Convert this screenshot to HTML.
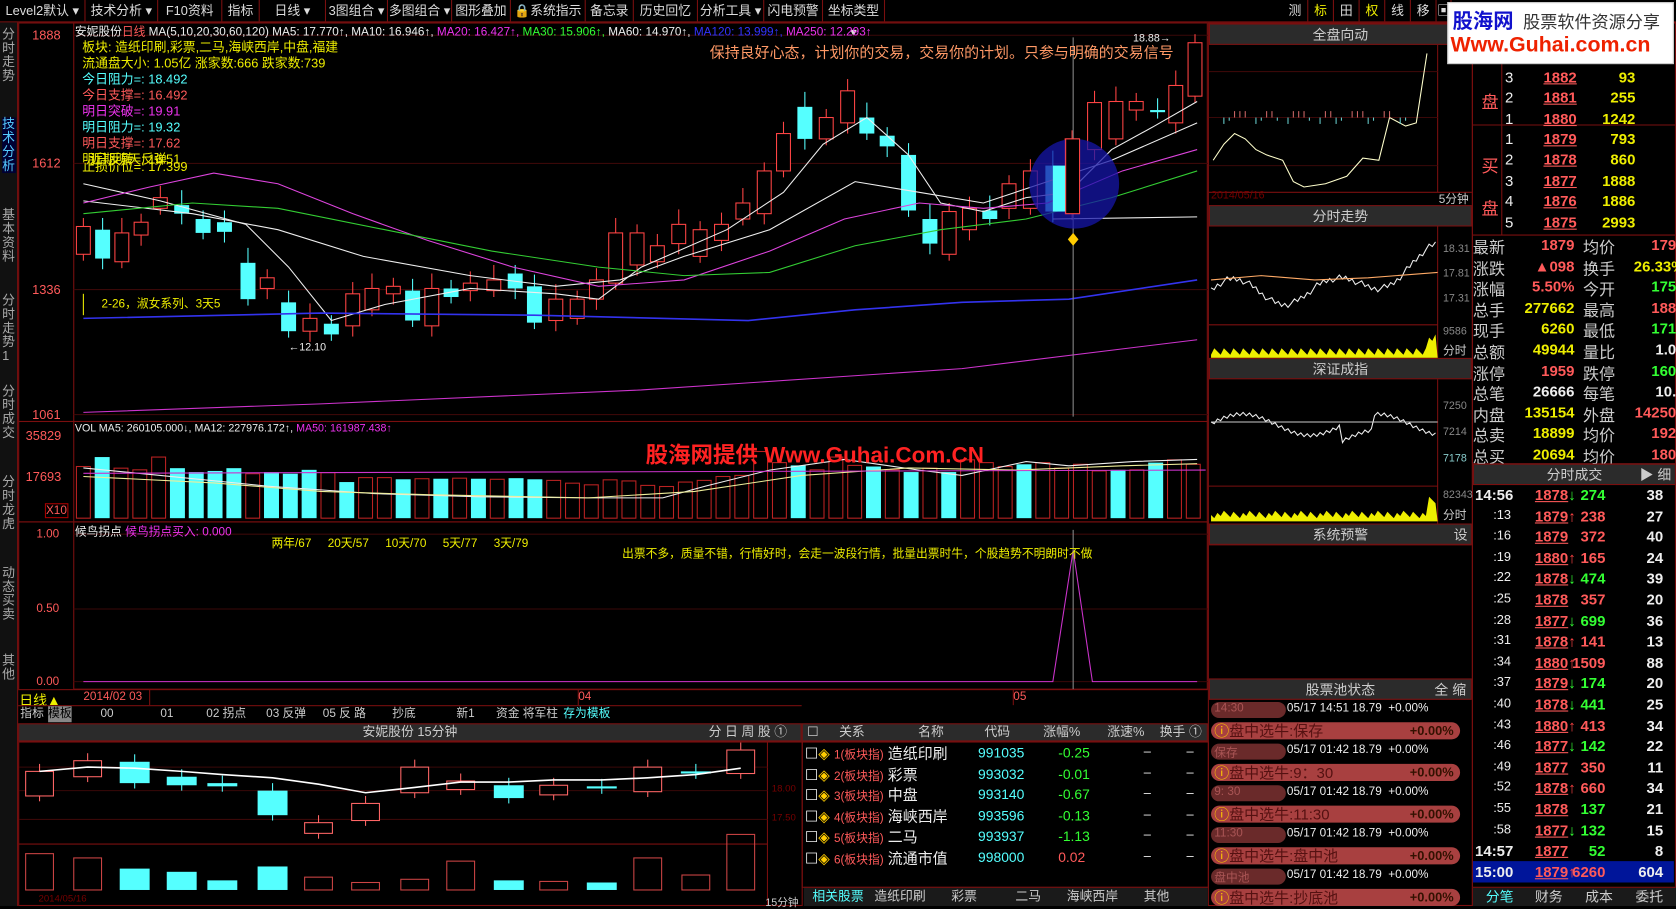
<!DOCTYPE html>
<html><head><meta charset="utf-8"><style>
*{margin:0;padding:0;box-sizing:border-box}
html,body{width:1676px;height:906px;overflow:hidden;background:#000}
#w{position:absolute;left:0;top:0;width:1568px;height:848px;transform:scale(1.06888,1.0684);transform-origin:0 0;font-family:"Liberation Sans","Noto Sans CJK SC",sans-serif;font-size:12px;color:#ccc;background:#000}
.a{position:absolute;white-space:nowrap}
.hd{position:absolute;background:#2b2b2b;color:#ccc;text-align:center;font-size:13px;border:1px solid #7a0f0f}
.tb{position:absolute;top:0;height:20px;line-height:20px;color:#ddd;font-size:12px;border-right:1px solid #7a0f0f;text-align:center}
.r{color:#ff5a5a}.g{color:#3f3}.y{color:#ee0}.c{color:#5ff}.m{color:#e3e}.w{color:#eee}
svg{position:absolute;left:0;top:0}
.ob{position:absolute;font-size:14px;font-weight:bold;white-space:nowrap}
</style></head><body><div id="w">
<div class="a" style="left:0;top:0;width:1568px;height:21px;background:#000;border-bottom:1px solid #7a0f0f"></div>
<div class="tb" style="left:0;width:80px">Level2默认 ▾</div>
<div class="tb" style="left:80px;width:68px">技术分析 ▾</div>
<div class="tb" style="left:148px;width:60px">F10资料</div>
<div class="tb" style="left:208px;width:35px">指标</div>
<div class="tb" style="left:243px;width:62px">日线 ▾</div>
<div class="tb" style="left:305px;width:58px">3图组合 ▾</div>
<div class="tb" style="left:363px;width:60px">多图组合 ▾</div>
<div class="tb" style="left:423px;width:55px">图形叠加</div>
<div class="tb" style="left:478px;width:70px">🔒系统指示</div>
<div class="tb" style="left:548px;width:45px">备忘录</div>
<div class="tb" style="left:593px;width:60px">历史回忆</div>
<div class="tb" style="left:653px;width:62px">分析工具 ▾</div>
<div class="tb" style="left:715px;width:55px">闪电预警</div>
<div class="tb" style="left:770px;width:58px">坐标类型 ▾</div>
<div class="tb" style="left:1200px;width:24px">测</div><div class="tb y" style="left:1224px;width:24px">标</div><div class="tb" style="left:1248px;width:24px">田</div><div class="tb y" style="left:1272px;width:24px">权</div><div class="tb" style="left:1296px;width:24px">线</div><div class="tb" style="left:1320px;width:24px">移</div><div class="tb" style="left:1344px;width:14px">▣</div>
<div class="a" style="left:0;top:21px;width:17px;height:827px;background:#111;border-right:1px solid #7a0f0f"></div>
<div class="a" style="left:2px;top:26px;width:13px;font-size:12px;white-space:normal;line-height:13px;color:#aaa">分时走势</div>
<div class="a" style="left:2px;top:110px;width:13px;font-size:12px;white-space:normal;line-height:13px;color:#5cf;background:#003">技术分析</div>
<div class="a" style="left:2px;top:195px;width:13px;white-space:normal;line-height:13px;color:#aaa">基本资料</div>
<div class="a" style="left:2px;top:275px;width:13px;white-space:normal;line-height:13px;color:#aaa">分时走势1</div>
<div class="a" style="left:2px;top:360px;width:13px;white-space:normal;line-height:13px;color:#aaa">分时成交</div>
<div class="a" style="left:2px;top:445px;width:13px;white-space:normal;line-height:13px;color:#aaa">分时龙虎</div>
<div class="a" style="left:2px;top:530px;width:13px;white-space:normal;line-height:13px;color:#aaa">动态买卖</div>
<div class="a" style="left:2px;top:612px;width:13px;white-space:normal;line-height:13px;color:#aaa">其他</div>

<svg id="s" width="1568" height="848"></svg>

<div class="a" style="left:70px;top:21px;font-size:11px"><span class="w">安妮股份</span><span class="r">日线</span> <span class="w">MA(5,10,20,30,60,120) MA5: 17.770↑, MA10: 16.946↑,</span> <span class="m">MA20: 16.427↑,</span> <span class="g">MA30: 15.906↑,</span> <span class="w">MA60: 14.970↑,</span> <span style="color:#33f">MA120: 13.999↑,</span> <span class="m">MA250: 12.293↑</span></div>
<div class="a y" style="left:77px;top:37px;font-size:12px;line-height:15px">板块: 造纸印刷,彩票,二马,海峡西岸,中盘,福建<br>流通盘大小: 1.05亿 涨家数:666 跌家数:739<br><span class="c">今日阻力=: 18.492</span><br><span class="r">今日支撑=: 16.492</span><br><span class="m">明日突破=: 19.91</span><br><span class="c">明日阻力=: 19.32</span><br><span class="r">明日支撑=: 17.62</span><br>明日反转=: 16.51<br><span style="position:relative;top:-8px">止损价位=: 17.399</span></div>
<div class="a y" style="left:84px;top:140px;font-size:12px">近期明天反弹</div>
<div class="a" style="left:664px;top:39px;font-size:14px;color:#f96">保持良好心态，计划你的交易，交易你的计划。只参与明确的交易信号</div>
<div class="a y" style="left:95px;top:276px;font-size:11px">2-26，淑女系列、3天5</div>
<div class="a w" style="left:270px;top:320px;font-size:10px">←12.10</div>
<div class="a w" style="left:1060px;top:31px;font-size:10px">18.88→</div>
<div class="a r" style="left:30px;top:26px;font-size:12px">1888</div>
<div class="a r" style="left:30px;top:146px;font-size:12px">1612</div>
<div class="a r" style="left:30px;top:264px;font-size:12px">1336</div>
<div class="a r" style="left:30px;top:381px;font-size:12px">1061</div>
<div class="a" style="left:70px;top:396px;font-size:10px"><span class="w">VOL MA5: 260105.000↓, MA12: 227976.172↑,</span> <span class="m">MA50: 161987.438↑</span></div>
<div class="a r" style="left:24px;top:401px;font-size:12px">35829</div>
<div class="a r" style="left:24px;top:439px;font-size:12px">17693</div>
<div class="a r" style="left:42px;top:471px;font-size:11px;border:1px solid #a00">X10</div>
<div class="a" style="left:604px;top:410px;font-size:21px;font-weight:bold;color:#f22">股海网提供 Www.Guhai.Com.CN</div>
<div class="a" style="left:70px;top:489px;font-size:11px"><span class="w">候鸟拐点</span> <span class="m">候鸟拐点买入: 0.000</span></div>
<div class="a r" style="left:34px;top:494px;font-size:11px">1.00</div>
<div class="a r" style="left:34px;top:564px;font-size:11px">0.50</div>
<div class="a r" style="left:34px;top:632px;font-size:11px">0.00</div>
<div class="a y" style="left:254px;top:500px;font-size:11px">两年/67 &nbsp;&nbsp;&nbsp;&nbsp;20天/57 &nbsp;&nbsp;&nbsp;&nbsp;10天/70 &nbsp;&nbsp;&nbsp;&nbsp;5天/77 &nbsp;&nbsp;&nbsp;&nbsp;3天/79</div>
<div class="a y" style="left:582px;top:510px;font-size:11px">出票不多，质量不错，行情好时，会走一波段行情，批量出票时牛，个股趋势不明朗时不做</div>
<div class="a y" style="left:18px;top:645px;font-size:13px">日线▲</div>
<div class="a r" style="left:78px;top:646px;font-size:11px">2014/02 03</div>
<div class="a r" style="left:541px;top:646px;font-size:11px">04</div>
<div class="a r" style="left:948px;top:646px;font-size:11px">05</div>
<div class="a" style="left:17px;top:660px;width:733px;height:16px;border-top:1px solid #7a0f0f;font-size:11px;line-height:15px;color:#ccc">
<span class="a" style="left:2px">指标</span><span class="a" style="left:28px;background:#888;color:#000">模板</span><span class="a" style="left:77px">00</span><span class="a" style="left:133px">01</span><span class="a" style="left:176px">02 拐点</span><span class="a" style="left:232px">03 反弹</span><span class="a" style="left:285px">05 反 路</span><span class="a" style="left:350px">抄底</span><span class="a" style="left:410px">新1</span><span class="a" style="left:447px">资金 将军柱</span><span class="a c" style="left:510px">存为模板</span></div>
<div class="hd" style="left:17px;top:677px;width:733px;height:17px;line-height:15px;font-size:12px">安妮股份 15分钟<span class="a" style="left:645px">分 日 周 股 ①</span></div>
<div class="a" style="left:36px;top:836px;font-size:9px;color:#700">2014/05/16</div>
<div class="a" style="left:716px;top:836px;font-size:10px;color:#ccc">15分钟</div>
<div class="a" style="left:722px;top:733px;font-size:9px;color:#700">18.00</div>
<div class="a" style="left:722px;top:760px;font-size:9px;color:#700">17.50</div>
<div class="hd" style="left:750px;top:677px;width:380px;height:17px;line-height:15px;font-size:12px;text-align:left">
<span class="a" style="left:4px">☐</span><span class="a" style="left:34px">关系</span><span class="a" style="left:108px">名称</span><span class="a" style="left:170px">代码</span><span class="a" style="left:225px">涨幅%</span><span class="a" style="left:285px">涨速%</span><span class="a" style="left:334px">换手 ①</span></div>
<div id="tbl"></div>
<div class="a" style="left:752px;top:830px;width:378px;height:18px;background:#1a1a1a;border-top:1px solid #7a0f0f;font-size:12px;line-height:17px">
<span class="a c" style="left:8px">相关股票</span><span class="a" style="left:66px">造纸印刷</span><span class="a" style="left:138px">彩票</span><span class="a" style="left:198px">二马</span><span class="a" style="left:246px">海峡西岸</span><span class="a" style="left:318px">其他</span></div>
<div class="hd" style="left:1131px;top:22px;width:246px;height:20px;line-height:19px">全盘向动</div>
<div class="a" style="left:1133px;top:178px;font-size:10px;color:#700">2014/05/16</div>
<div class="a" style="left:1346px;top:178px;font-size:11px">5分钟</div>
<div class="hd" style="left:1131px;top:192px;width:246px;height:20px;line-height:19px">分时走势</div>
<div class="a" style="left:1350px;top:228px;font-size:10px;color:#888">18.31</div>
<div class="a" style="left:1350px;top:251px;font-size:10px;color:#888">17.81</div>
<div class="a" style="left:1350px;top:274px;font-size:10px;color:#888">17.31</div>
<div class="a" style="left:1350px;top:305px;font-size:10px;color:#888">9586</div>
<div class="a" style="left:1350px;top:320px;font-size:11px">分时</div>
<div class="hd" style="left:1131px;top:335px;width:246px;height:20px;line-height:19px">深证成指</div>
<div class="a" style="left:1350px;top:375px;font-size:10px;color:#888">7250</div>
<div class="a" style="left:1350px;top:399px;font-size:10px;color:#888">7214</div>
<div class="a" style="left:1350px;top:424px;font-size:10px;color:#8cc">7178</div>
<div class="a" style="left:1350px;top:458px;font-size:10px;color:#888">82343</div>
<div class="a" style="left:1350px;top:474px;font-size:11px">分时</div>
<div class="hd" style="left:1131px;top:490px;width:246px;height:20px;line-height:19px">系统预警<span class="a" style="left:228px">设</span></div>
<div class="hd" style="left:1131px;top:635px;width:246px;height:20px;line-height:19px">股票池状态<span class="a" style="left:210px">全 缩</span></div>
<div id="pool"></div>
<div class="a" style="left:1354px;top:2px;width:212px;height:58px;background:#fff;border:1px solid #ccc"></div>
<div class="a" style="left:1359px;top:5px;font-size:19px;font-weight:bold;color:#11c">股海网</div>
<div class="a" style="left:1425px;top:7px;font-size:16px;color:#333">股票软件资源分享</div>
<div class="a" style="left:1357px;top:31px;font-size:20px;font-weight:bold;color:#e20">Www.Guhai.com.cn</div>
<div id="ob"></div>
<div class="hd" style="left:1378px;top:434px;width:190px;height:20px;line-height:19px">分时成交<span class="a" style="left:155px">▶ 细</span></div>
<div id="tk"></div>
<div class="a" style="left:1378px;top:830px;width:190px;height:18px;background:#1a1a1a;border-top:1px solid #7a0f0f;font-size:13px;line-height:17px">
<span class="a c" style="left:12px">分笔</span><span class="a" style="left:58px">财务</span><span class="a" style="left:105px">成本</span><span class="a" style="left:152px">委托</span></div>
</div>
<script>
var s=document.getElementById('s'),h='';
function L(x1,y1,x2,y2,c,w){h+='<line x1="'+x1+'" y1="'+y1+'" x2="'+x2+'" y2="'+y2+'" stroke="'+c+'" stroke-width="'+(w||1)+'"/>';}
function R(x,y,w,hh,f,st){h+='<rect x="'+x+'" y="'+y+'" width="'+w+'" height="'+hh+'" fill="'+f+'" stroke="'+(st||'none')+'"/>';}
function P(pts,c,w){h+='<polyline points="'+pts+'" fill="none" stroke="'+c+'" stroke-width="'+(w||1)+'"/>';}
var B='#7a0f0f';
R(17.5,21.5,1112,373,'none',B);R(17.5,394.5,1112,94,'none',B);R(17.5,488.5,1112,157,'none',B);
L(69,21,69,645,B);
[33,153,271,388].forEach(function(y){L(69,y,1130,y,'#3a0808')});
[500,570,638].forEach(function(y){L(69,y,1130,y,'#3a0808')});
L(69,645,1130,645,B);
var C=[[78,212,238,1],[96,215,242,0],[114,218,245,1],[132,208,220,1],[150,185,195,1],[170,192,200,0],[190,205,218,0],[210,208,217,0],[232,246,280,0],[250,260,270,1],[270,283,310,0],[290,298,310,1],[310,303,313,0],[330,275,305,1],[348,270,290,1],[368,268,275,1],[386,272,300,0],[404,270,305,1],[422,270,278,0],[440,265,272,1],[462,262,272,1],[482,256,270,0],[500,268,302,0],[520,280,300,1],[540,280,298,1],[558,262,280,1],[576,218,265,1],[596,218,248,1],[615,230,245,1],[635,210,228,1],[655,215,240,1],[675,210,225,1],[695,190,205,1],[715,160,200,1],[733,125,160,1],[753,100,130,0],[773,110,130,1],[793,85,115,1],[811,110,125,0],[830,127,137,0],[850,145,197,0],[870,205,228,0],[888,198,238,1],[907,195,215,1],[926,197,205,0],[944,172,195,1],[964,160,195,1],[985,155,198,0],[1003,130,200,1],[1024,96,140,1],[1044,95,130,1],[1063,95,103,1],[1083,103,105,0],[1100,80,115,1],[1118,40,90,1]];
C.forEach(function(c,i){var x=c[0],col=c[3]?'#f44':'#5ff';L(x,c[1]-8-(i%3)*3,x,c[2]+6+(i%2)*4,col);
 if(c[3])R(x-6.5,c[1],13,c[2]-c[1],'#000',col);else R(x-7,c[1],14,c[2]-c[1],'#5ff');});
P('78,172 150,188 230,210 270,250 310,300 360,285 440,270 520,275 560,280 600,250 680,215 733,180 770,135 811,110 850,145 880,190 920,198 960,185 1000,180 1040,140 1080,118 1120,95','#eee');
P('78,188 180,200 260,215 340,240 440,258 520,268 580,262 640,240 720,215 800,170 860,180 920,190 980,170 1040,150 1120,115','#eee');
P('78,190 140,175 200,162 260,172 330,200 400,225 480,250 560,268 640,262 720,235 790,205 860,190 920,195 980,190 1050,160 1120,140','#d4d');
P('78,200 180,190 260,195 360,215 460,235 560,250 640,258 720,255 800,230 880,215 960,205 1040,185 1120,160','#3c3');
P('78,298 300,293 500,295 700,300 800,290 900,283 1000,280 1120,262','#33e',1.5);
P('78,386 300,378 600,365 900,345 1120,318','#c3c');
P('985,205 1120,203','#eee');
L(1004,35,1004,390,'#888');
h+='<circle cx="1005" cy="172" r="42" fill="#1515a8" fill-opacity="0.75"/>';
R(985,155,14,43,'#5ff');R(997,130,13,70,'#000','#f44');
h+='<path d="M1004 218l5 6-5 6-5-6z" fill="#fc0"/>';
L(78,275,78,295,'#ee0');
var V=[262,245,265,268,245,265,272,270,265,275,272,275,268,273,290,282,282,285,284,284,283,284,285,283,285,287,292,295,286,288,296,298,290,287,280,278,235,255,260,268,245,260,262,268,272,265,272,250,255,262,258,255,265,258,270,268,268,255,250,258];
for(var i=0;i<60;i++){var x=78+i*17.6,t=420+(V[i%V.length]-230)*0.52;t=Math.max(405,Math.min(t,482));var cy=[1,5,6,7,8,10,11,12,14,17,19,21,23,24,38,42,44,46,50,55,57].indexOf(i)>=0;
 if(cy)R(x-7,t,14,485-t,'#5ff');else R(x-6.5,t,13,485-t,'none','#b22');}
P('78,438 150,445 250,455 350,462 450,465 550,466 620,466 660,455 720,440 790,430 860,440 900,445 960,432 1000,436 1060,432 1120,430','#eee');
P('78,446 200,452 300,460 400,463 550,466 650,460 750,445 850,438 950,440 1050,436 1120,434','#ee9');
L(78,443,1128,440,'#c3c');
P('78,638 985,638 1004,515 1022,638 1120,638','#c3c');
L(1004,496,1004,645,'#888');
[140,541,948].forEach(function(x){L(x,645,x,660,B)});
R(17.5,694.5,733,153,'none',B);L(17,790,718,790,B);L(718,694,718,848,B);
[718,740,767].forEach(function(y){L(18,y,718,y,'#3a0808')});
var F=[[37,722,745,1],[82,712,727,1],[126,713,733,0],[170,727,735,0],[208,733,736,0],[255,740,763,0],[298,770,780,1],[342,752,768,1],[388,718,742,1],[431,731,739,1],[476,735,747,0],[518,735,744,1],[563,736,738,0],[606,718,741,1],[651,722,724,0],[693,702,724,1]];
F.forEach(function(c){var col=c[3]?'#f66':'#5ff';L(c[0],c[1]-7,c[0],c[2]+5,col);if(c[3])R(c[0]-13,c[1],26,c[2]-c[1],'#000',col);else R(c[0]-14,c[1],28,Math.max(2,c[2]-c[1]),'#5ff');});
var VH=[34,30,20,17,9,22,12,7,10,27,9,8,7,30,14,52],VC=[0,0,1,1,1,1,0,0,0,0,1,0,1,0,0,0];
F.forEach(function(c,i){if(VC[i])R(c[0]-14,833-VH[i],28,VH[i],'#5ff');else R(c[0]-13,833-VH[i],26,VH[i],'none','#c44')});
P('37,722 82,718 126,719 170,722 208,725 255,728 298,734 342,742 388,737 431,732 476,732 518,730 563,730 606,728 651,725 693,719','#fff',1.5);
R(750.5,694.5,380,136,'none',B);
R(1130.5,21.5,247,826,'none',B);
L(1345,42,1345,180,B);[67,110,155].forEach(function(y){L(1131,y,1345,y,'#3a0808')});
P('1135,150 1145,135 1155,125 1165,130 1175,140 1185,145 1200,150 1210,170 1220,175 1240,172 1260,165 1275,148 1290,150 1300,110 1315,118 1325,115 1335,50','#ffc');
for(var x=1140;x<1320;x+=5){var up=(x*7)%11<5;L(x,110,x,up?104:110+((x*3)%9),up?'#c66':'#6cc');}
L(1131,180,1377,180,B);
L(1345,212,1345,335,B);L(1131,304,1345,304,B);
var p='',q='';for(var x=1133;x<1345;x+=3){var y=270-12*Math.sin(x/15)-(x>1250?(x-1250)*0.35:0)+((x*13)%7);p+=x+','+y+' ';q+=x+','+(335-((x*17)%9)-(x>1335?15:2))+' ';}
P(p,'#eee');P('1133,262 1180,258 1230,262 1280,260 1345,255','#fa6');
h+='<polygon points="1133,335 '+q+'1345,335" fill="#ee0"/>';
L(1345,355,1345,490,B);L(1131,455,1345,455,B);
var p2='',q2='';for(var x=1133;x<1345;x+=3){var y=395-10*Math.sin(x/20)+((x*11)%6)+(x>1255&&x<1285?15:0);p2+=x+','+y+' ';q2+=x+','+(487-((x*7)%8)-(x>1335?15:2))+' ';}
P(p2,'#eee');P('1133,395 1345,395','#ccc');
h+='<polygon points="1133,488 '+q2+'1345,488" fill="#ee0"/>';
L(1131,510,1377,510,B);
R(1377.5,21.5,190,826,'none',B);
L(1378,117,1568,117,B);L(1378,220,1568,220,B);L(1405,60,1405,220,B);
L(1378,434,1568,434,B);
h+='<rect x="1378" y="806" width="188" height="20" fill="#00159a"/>';
s.innerHTML=h;
var T=[['造纸印刷','991035','-0.25'],['彩票','993032','-0.01'],['中盘','993140','-0.67'],['海峡西岸','993596','-0.13'],['二马','993937','-1.13'],['流通市值','998000','0.02']],th='';
T.forEach(function(r,i){var y=696+i*19.5;th+='<div class="a" style="left:753px;top:'+y+'px;font-size:14px;line-height:18px"><span class="w">☐</span><span style="color:#fc0">◈</span> <span class="r" style="font-size:11px">'+(i+1)+'(板块指)</span> <span class="w">'+r[0]+'</span></div><div class="a c" style="left:915px;top:'+(y+1)+'px;font-size:13px">'+r[1]+'</div><div class="a '+(r[2][0]=='-'?'g':'r')+'" style="left:990px;top:'+(y+1)+'px;font-size:13px">'+r[2]+'</div><div class="a w" style="left:1070px;top:'+y+'px">–</div><div class="a w" style="left:1110px;top:'+y+'px">–</div>';});
document.getElementById('tbl').innerHTML=th;
var PL=[['14:30','05/17 14:51 18.79','保存'],['保存','05/17 01:42 18.79','9：30'],['9: 30','05/17 01:42 18.79','11:30'],['11:30','05/17 01:42 18.79','盘中池'],['盘中池','05/17 01:42 18.79','抄底池']],ph='';
PL.forEach(function(r,i){var y=657+i*39;ph+='<div class="a" style="left:1133px;top:'+y+'px;width:70px;height:15px;border-radius:8px;background:#6a2a2a;color:#a55;font-size:11px;padding-left:3px">'+r[0]+'</div><div class="a w" style="left:1204px;top:'+y+'px;font-size:11px">'+r[1]+' &nbsp;+0.00%</div><div class="a" style="left:1133px;top:'+(y+19)+'px;width:233px;height:16px;border-radius:8px;background:#a84040;color:#511;font-size:14px;line-height:16px;padding-left:3px"><span style="color:#fc0">ⓘ</span>盘中选牛:'+r[2]+'<span style="position:absolute;right:6px;font-size:12px;font-weight:bold;color:#310">+0.00%</span></div>';});
document.getElementById('pool').innerHTML=ph;
var ob='<div class="ob r" style="left:1386px;top:82px;font-weight:normal;font-size:16px">盘</div><div class="ob r" style="left:1386px;top:142px;font-weight:normal;font-size:16px">买</div><div class="ob r" style="left:1386px;top:182px;font-weight:normal;font-size:16px">盘</div>';
var A=[['3','1882','93',64],['2','1881','255',83],['1','1880','1242',103],['1','1879','793',122],['2','1878','860',141],['3','1877','1888',161],['4','1876','1886',180],['5','1875','2993',200]];
A.forEach(function(a){ob+='<div class="ob w" style="left:1408px;top:'+a[3]+'px;font-weight:normal">'+a[0]+'</div><div class="ob r" style="left:1444px;top:'+a[3]+'px;text-decoration:underline">'+a[1]+'</div><div class="ob y" style="left:1470px;width:60px;text-align:right;top:'+a[3]+'px">'+a[2]+'</div>';});
var Q=[['最新','1879','r','均价','1799','r'],['涨跌','▲098','r','换手','26.33%','y'],['涨幅','5.50%','r','今开','1757','g'],['总手','277662','y','最高','1880','r'],['现手','6260','y','最低','1710','g'],['总额','49944','y','量比','1.07','w'],['涨停','1959','r','跌停','1603','g'],['总笔','26666','w','每笔','10.4','w'],['内盘','135154','y','外盘','142508','r'],['总卖','18899','y','均价','1923','r'],['总买','20694','y','均价','1805','r']];
Q.forEach(function(q,i){var y=221+i*19.6;ob+='<div class="ob" style="left:1378px;top:'+y+'px;font-weight:normal;font-size:15px;color:#ccc">'+q[0]+'</div><div class="ob '+q[2]+'" style="left:1413px;width:60px;text-align:right;top:'+y+'px">'+q[1]+'</div><div class="ob" style="left:1481px;top:'+y+'px;font-weight:normal;font-size:15px;color:#ccc">'+q[3]+'</div><div class="ob '+q[5]+'" style="left:1516px;width:60px;text-align:right;top:'+y+'px">'+q[4]+'</div>';});
document.getElementById('ob').innerHTML=ob;
var K=[['14:56','1878','↓','274','38','g'],[':13','1879','↑','238','27','r'],[':16','1879','','372','40','r'],[':19','1880','↑','165','24','r'],[':22','1878','↓','474','39','g'],[':25','1878','','357','20','r'],[':28','1877','↓','699','36','g'],[':31','1878','↑','141','13','r'],[':34','1880','↑','1509','88','r'],[':37','1879','↓','174','20','g'],[':40','1878','↓','441','25','g'],[':43','1880','↑','413','34','r'],[':46','1877','↓','142','22','g'],[':49','1877','','350','11','r'],[':52','1878','↑','660','34','r'],[':55','1878','','137','21','g'],[':58','1877','↓','132','15','g'],['14:57','1877','','52','8','g'],['15:00','1879','↑','6260','604','r']],tk='';
K.forEach(function(k,i){var y=455+i*19.6,big=k[0].length>3;tk+='<div class="ob w" style="left:'+(big?1380:1397)+'px;top:'+y+'px;font-weight:'+(big?'bold':'normal')+';font-size:'+(big?14:12)+'px">'+k[0]+'</div><div class="ob r" style="left:1436px;top:'+y+'px"><u>'+k[1]+'</u><span style="color:'+(k[2]=='↑'?'#f44':'#3f3')+'">'+k[2]+'</span></div><div class="ob '+k[5]+'" style="left:1460px;width:42px;text-align:right;top:'+y+'px">'+k[3]+'</div><div class="ob w" style="left:1520px;width:36px;text-align:right;top:'+y+'px">'+k[4]+'</div>';});
document.getElementById('tk').innerHTML=tk;
</script>
</body></html>
